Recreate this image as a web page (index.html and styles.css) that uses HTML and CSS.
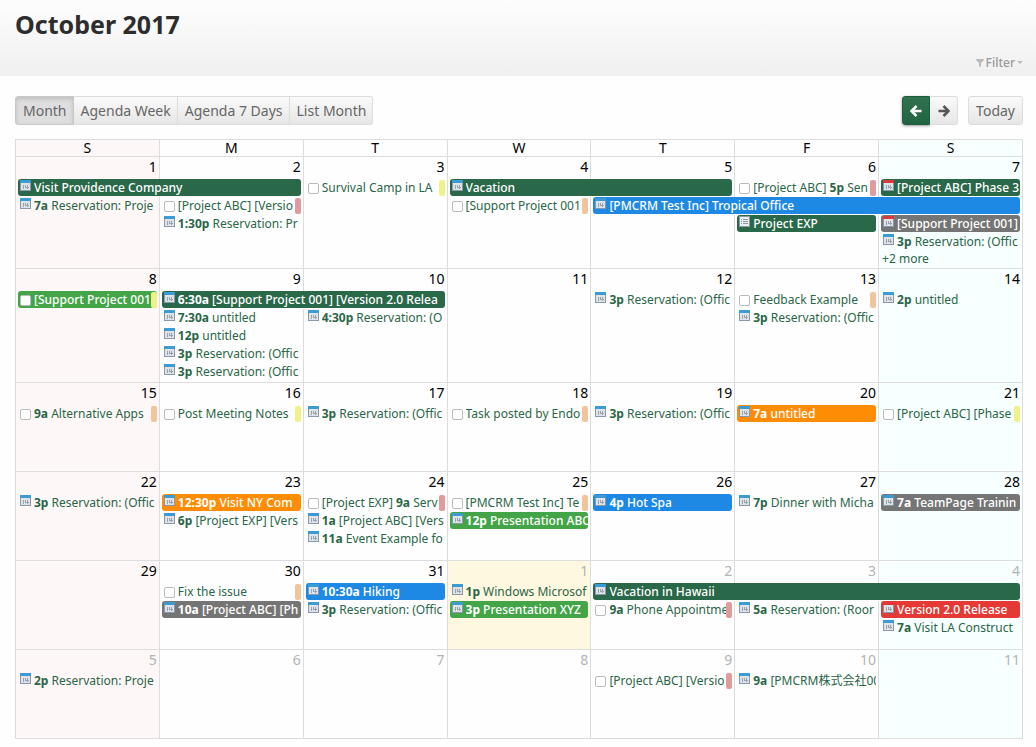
FILE: index.html
```html
<!DOCTYPE html>
<html lang="en">
<head>
    <meta charset="UTF-8">
    <meta name="viewport" content="width=device-width, initial-scale=1.0">
    <title>October 2017</title>
    <link rel="stylesheet" href="styles.css">
</head>
<body>
    <!-- Icons shared by the events -->
    <svg class="sprite" aria-hidden="true">
        <symbol id="icon-cal" viewBox="0 0 11 11">
            <rect width="11" height="11" fill="#8a98a8"/>
            <rect x="1" y="3" width="9" height="7" fill="#dde3e9"/>
            <rect width="11" height="3" fill="#3b9bd2"/>
            <path d="M3.500 5v4M5.500 5v2.500M5 7.500h4M7.500 5v4" fill="none" stroke="#97a3af" stroke-width="1"/>
        </symbol>
        <symbol id="icon-red" viewBox="0 0 11 11">
            <rect width="11" height="11" fill="#8a98a8"/>
            <rect x="1" y="3" width="9" height="7" fill="#dde3e9"/>
            <rect width="11" height="3" fill="#dc3a3a"/>
            <path d="M3.500 5v4M5.500 5v2.500M5 7.500h4M7.500 5v4" fill="none" stroke="#97a3af" stroke-width="1"/>
        </symbol>
        <symbol id="icon-list" viewBox="0 0 11 11">
            <rect width="11" height="11" fill="#8f9a9f"/>
            <rect x="1" y="1" width="9" height="9" fill="#e9edef"/>
            <path d="M2 3.500h1M4 3.500h5M2 5.500h1M4 5.500h5M2 7.500h1M4 7.500h5" stroke="#8f9a9f" stroke-width="1"/>
        </symbol>
    </svg>

    <header>
        <h1>October 2017</h1>
        <button class="filter" type="button">
            <svg width="8" height="8" viewBox="0 0 8 8"><path d="M0 0h8v1L5 4v4L3 7V4L0 1z" fill="#bbb"/></svg>
            Filter
            <svg width="6" height="4" viewBox="0 0 6 4"><path d="M0 0h6L3 3z" fill="#bbb"/></svg>
        </button>
    </header>

    <main>
        <div class="toolbar">
            <div class="group">
                <button type="button" class="active">Month</button>
                <button type="button">Agenda Week</button>
                <button type="button">Agenda 7 Days</button>
                <button type="button">List Month</button>
            </div>
            <div class="nav">
                <div class="group">
                    <button type="button" class="arrow primary" aria-label="Previous">
                        <svg width="12" height="12" viewBox="0 0 12 12"><path d="M11.500 6H2M6.500 1L1.500 6L6.500 11" fill="none" stroke="#fff" stroke-width="2.600"/></svg>
                    </button>
                    <button type="button" class="arrow" aria-label="Next">
                        <svg width="12" height="12" viewBox="0 0 12 12"><path d="M0.500 6H10M5.500 1L10.500 6L5.500 11" fill="none" stroke="#555" stroke-width="2.600"/></svg>
                    </button>
                </div>
                <button type="button">Today</button>
            </div>
        </div>

        <table class="calendar" id="calendar">
            <colgroup>
                <col class="sunday"><col><col><col><col><col><col class="saturday">
            </colgroup>
            <thead>
                <tr><th>S</th><th>M</th><th>T</th><th>W</th><th>T</th><th>F</th><th>S</th></tr>
            </thead>
        </table>
    </main>

    <script src="calendar.js"></script>
</body>
</html>
```

FILE: calendar.js
```js
// Each row holds events as [column, span, icon, text, color, tag]
// Text between asterisks is the time and is drawn bold
const weeks = [
    { days: [1, 2, 3, 4, 5, 6, 7], rows: [
        [[0, 2, 'cal', 'Visit Providence Company', 'green'],
         [2, 1, 'task', 'Survival Camp in LA', '', 'yellow'],
         [3, 2, 'cal', 'Vacation', 'green'],
         [5, 1, 'task', '[Project ABC] *5p* Sen', '', 'red'],
         [6, 1, 'red', '[Project ABC] Phase 3', 'green']],
        [[0, 1, 'cal', '*7a* Reservation: Proje'],
         [1, 1, 'task', '[Project ABC] [Versio', '', 'red'],
         [3, 1, 'task', '[Support Project 001', '', 'orange'],
         [4, 3, 'cal', '[PMCRM Test Inc] Tropical Office', 'blue']],
        [[1, 1, 'cal', '*1:30p* Reservation: Pr'],
         [5, 1, 'list', 'Project EXP', 'green'],
         [6, 1, 'red', '[Support Project 001]', 'gray']],
        [[6, 1, 'cal', '*3p* Reservation: (Offic']],
        [[6, 1, 'more', '+2 more']]
    ] },
    { days: [8, 9, 10, 11, 12, 13, 14], rows: [
        [[0, 1, 'task', '[Support Project 001', 'lime', 'yellow'],
         [1, 2, 'cal', '*6:30a* [Support Project 001] [Version 2.0 Relea', 'green'],
         [4, 1, 'cal', '*3p* Reservation: (Offic'],
         [5, 1, 'task', 'Feedback Example', '', 'orange'],
         [6, 1, 'cal', '*2p* untitled']],
        [[1, 1, 'cal', '*7:30a* untitled'],
         [2, 1, 'cal', '*4:30p* Reservation: (O'],
         [5, 1, 'cal', '*3p* Reservation: (Offic']],
        [[1, 1, 'cal', '*12p* untitled']],
        [[1, 1, 'cal', '*3p* Reservation: (Offic']],
        [[1, 1, 'cal', '*3p* Reservation: (Offic']]
    ] },
    { days: [15, 16, 17, 18, 19, 20, 21], rows: [
        [[0, 1, 'task', '*9a* Alternative Apps', '', 'orange'],
         [1, 1, 'task', 'Post Meeting Notes', '', 'yellow'],
         [2, 1, 'cal', '*3p* Reservation: (Offic'],
         [3, 1, 'task', 'Task posted by Endo', '', 'orange'],
         [4, 1, 'cal', '*3p* Reservation: (Offic'],
         [5, 1, 'cal', '*7a* untitled', 'amber'],
         [6, 1, 'task', '[Project ABC] [Phase', '', 'yellow']]
    ] },
    { days: [22, 23, 24, 25, 26, 27, 28], rows: [
        [[0, 1, 'cal', '*3p* Reservation: (Offic'],
         [1, 1, 'cal', '*12:30p* Visit NY Com', 'amber'],
         [2, 1, 'task', '[Project EXP] *9a* Serv', '', 'red'],
         [3, 1, 'task', '[PMCRM Test Inc] Te', '', 'orange'],
         [4, 1, 'cal', '*4p* Hot Spa', 'blue'],
         [5, 1, 'cal', '*7p* Dinner with Micha'],
         [6, 1, 'cal', '*7a* TeamPage Trainin', 'gray']],
        [[1, 1, 'cal', '*6p* [Project EXP] [Vers'],
         [2, 1, 'cal', '*1a* [Project ABC] [Vers'],
         [3, 1, 'cal', '*12p* Presentation ABC', 'lime']],
        [[2, 1, 'cal', '*11a* Event Example fo']]
    ] },
    { days: [29, 30, 31, 1, 2, 3, 4], today: 3, otherFrom: 3, rows: [
        [[1, 1, 'task', 'Fix the issue', '', 'orange'],
         [2, 1, 'cal', '*10:30a* Hiking', 'blue'],
         [3, 1, 'cal', '*1p* Windows Microsof'],
         [4, 3, 'cal', 'Vacation in Hawaii', 'green']],
        [[1, 1, 'cal', '*10a* [Project ABC] [Ph', 'gray'],
         [2, 1, 'cal', '*3p* Reservation: (Offic'],
         [3, 1, 'cal', '*3p* Presentation XYZ', 'lime'],
         [4, 1, 'task', '*9a* Phone Appointme', '', 'red'],
         [5, 1, 'cal', '*5a* Reservation: (Roor'],
         [6, 1, 'red', 'Version 2.0 Release', 'crimson']],
        [[6, 1, 'cal', '*7a* Visit LA Construct']]
    ] },
    { days: [5, 6, 7, 8, 9, 10, 11], otherFrom: 0, rows: [
        [[0, 1, 'cal', '*2p* Reservation: Proje'],
         [4, 1, 'task', '[Project ABC] [Versio', '', 'red'],
         [5, 1, 'cal', '*9a* [PMCRM株式会社00']]
    ] }
];

const calendar = document.getElementById('calendar');

// Build the markup of one event
function eventHtml([, , icon, text, color = '', tag]) {
    const label = text.replace(/\*(.+?)\*/, '<b>$1</b>');
    if (icon === 'more') {
        return `<a href="#" class="more">${label}</a>`;
    }
    const mark = icon === 'task'
        ? `<input type="checkbox" aria-label="${text.replace(/\*/g, '')}">`
        : `<svg class="icon" width="11" height="11"><use href="#icon-${icon}"/></svg>`;
    const flag = tag ? `<span class="tag ${tag}"></span>` : '';
    return `<div class="event ${color ? 'filled ' + color : ''}">${mark}<a href="#">${label}</a>${flag}</div>`;
}

// Build a table row, filling the columns that have no event
function rowHtml(week, events, className) {
    let cells = '';
    let col = 0;
    while (col < 7) {
        const event = events.find(e => e[0] === col);
        const today = col === week.today ? ' class="today"' : '';
        cells += event
            ? `<td colspan="${event[1]}"${today}>${eventHtml(event)}</td>`
            : `<td${today}></td>`;
        col += event ? event[1] : 1;
    }
    return `<tr class="${className}">${cells}</tr>`;
}

weeks.forEach(week => {
    const body = document.createElement('tbody');
    const days = week.days.map((day, i) => {
        const names = (i >= week.otherFrom ? 'other ' : '') + (i === week.today ? 'today' : '');
        return `<td class="${names}">${day}</td>`;
    }).join('');
    let html = `<tr class="days">${days}</tr>`;
    // Every week has room for at least three events
    const count = Math.max(3, week.rows.length);
    for (let i = 0; i < count; i++) {
        const events = week.rows[i] || [];
        const isMore = events.some(e => e[2] === 'more');
        html += rowHtml(week, events, isMore ? 'more-row' : 'events');
    }
    html += rowHtml(week, [], count > 3 ? 'space small' : 'space');
    body.innerHTML = html;
    calendar.appendChild(body);
});
```

FILE: styles.css
```css
/* Page */
body {
    margin: 0;
    background-color: #fefefe;
    color: #000;
    font-family: "Noto Sans", "Noto Sans CJK JP", sans-serif;
    font-size: 12px;
}

.sprite {
    display: none;
}

header {
    display: flex;
    justify-content: space-between;
    height: 76px;
    padding: 0 13px 0 15px;
    box-sizing: border-box;
    background: linear-gradient(#fdfdfd, #f0f0f0);
}

h1 {
    margin: 7px 0 0;
    font-size: 25px;
    line-height: 34px;
    color: #2d2d2d;
}

button {
    font-family: inherit;
    cursor: pointer;
}

.filter {
    display: flex;
    align-items: center;
    align-self: flex-end;
    gap: 2px;
    margin-bottom: 4px;
    padding: 0;
    border: none;
    background: none;
    color: #999;
    font-size: 12px;
    font-weight: 500;
    line-height: 18px;
}

main {
    padding: 20px 13px 8px 15px;
}

/* Toolbar */
.toolbar, .nav, .group {
    display: flex;
}

.toolbar {
    justify-content: space-between;
    margin-bottom: 14px;
}

.nav {
    gap: 10px;
}

.toolbar button {
    height: 29px;
    padding: 0 7px;
    border: 1px solid #ddd;
    border-radius: 3px;
    background: linear-gradient(#fafafa, #e6e6e6);
    color: #666;
    font-size: 14px;
}

.toolbar .group button {
    padding: 0 6px 0 7px;
}

.group button:not(:first-child) {
    border-left: none;
    border-top-left-radius: 0;
    border-bottom-left-radius: 0;
}

.group button:not(:last-child) {
    border-top-right-radius: 0;
    border-bottom-right-radius: 0;
}

.toolbar .active {
    border-color: #c8c8c8;
    background: #dedede;
    box-shadow: inset 0 2px 4px rgba(0, 0, 0, 0.15);
}

.toolbar .group .arrow {
    display: flex;
    align-items: center;
    justify-content: center;
    width: 28px;
    padding: 0;
}

.toolbar .primary {
    border-color: #1d5c3c;
    background: linear-gradient(#2f7350, #1f6340);
    box-shadow: 0 1px 3px rgba(0, 0, 0, 0.4);
}

/* Calendar */
.calendar {
    width: 100%;
    table-layout: fixed;
    border-spacing: 0;
    border-right: 1px solid #ddd;
    border-bottom: 1px solid #ddd;
}

.sunday {
    background-color: #fef7f7;
}

.saturday {
    background-color: #f8ffff;
}

th, td {
    padding: 0;
    border-left: 1px solid #ddd;
}

th {
    height: 16px;
    border-top: 1px solid #ddd;
    font-size: 14px;
    font-weight: normal;
    line-height: 16px;
}

.days td {
    height: 22px;
    padding-right: 2px;
    border-top: 1px solid #ddd;
    font-size: 14px;
    line-height: 20px;
    text-align: right;
    vertical-align: top;
}

.days .other {
    color: #b3b3b3;
}

.today {
    background-color: #fef8e1;
}

.events td {
    height: 18px;
}

.more-row td {
    height: 16px;
}

.space td {
    height: 12px;
}

.small td {
    height: 1px;
}

/* Events */
.event {
    display: flex;
    position: relative;
    height: 17px;
    margin: 0 2px 1px 2px;
    padding-left: 2px;
    border-radius: 3px;
    line-height: 17px;
    white-space: nowrap;
}

.event a {
    flex: 1;
    overflow: hidden;
    color: #2a6648;
    text-decoration: none;
}

.filled a {
    color: #fff;
    font-weight: 500;
}

.event .icon {
    flex: none;
    margin: 1px 3px 0 0;
}

.event input {
    flex: none;
    width: 11px;
    height: 11px;
    margin: 4px 3px 0 0;
    appearance: none;
    border: 1px solid #bbb;
    border-radius: 2px;
    background-color: #fff;
}

.tag {
    position: absolute;
    top: 1px;
    right: 0;
    width: 6px;
    height: 16px;
    border-radius: 2px;
}

.more {
    display: block;
    padding-left: 3px;
    color: #2a6648;
    line-height: 16px;
    text-decoration: none;
}

.tag.yellow { background-color: #f1f18a; }
.tag.orange { background-color: #f2c49c; }
.tag.red { background-color: #e09c9c; }

.green { background-color: #2a684a; }
.lime { background-color: #43a547; }
.blue { background-color: #1e88e5; }
.amber { background-color: #ff8c05; }
.gray { background-color: #757575; }
.crimson { background-color: #e53935; }
```
